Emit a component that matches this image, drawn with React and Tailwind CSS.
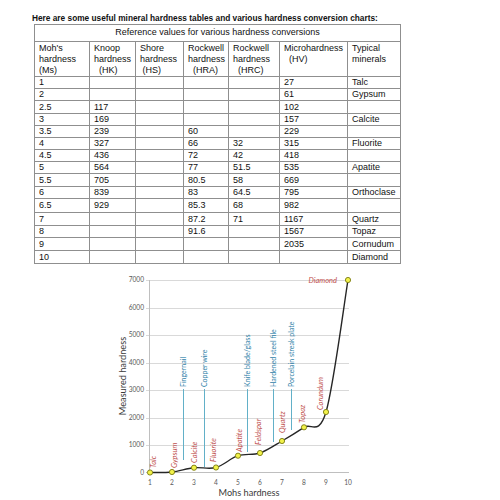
const ROWS = [
  ['1', '', '', '', '', '27', 'Talc'],
  ['2', '', '', '', '', '61', 'Gypsum'],
  ['2.5', '117', '', '', '', '102', ''],
  ['3', '169', '', '', '', '157', 'Calcite'],
  ['3.5', '239', '', '60', '', '229', ''],
  ['4', '327', '', '66', '32', '315', 'Fluorite'],
  ['4.5', '436', '', '72', '42', '418', ''],
  ['5', '564', '', '77', '51.5', '535', 'Apatite'],
  ['5.5', '705', '', '80.5', '58', '669', ''],
  ['6', '839', '', '83', '64.5', '795', 'Orthoclase'],
  ['6.5', '929', '', '85.3', '68', '982', ''],
  ['7', '', '', '87.2', '71', '1167', 'Quartz'],
  ['8', '', '', '91.6', '', '1567', 'Topaz'],
  ['9', '', '', '', '', '2035', 'Cornudum'],
  ['10', '', '', '', '', '', 'Diamond'],
]

// header lines; the leading nbsp's mimic the odd indent in the source table
const HEAD = [
  ["Moh's", 'hardness', '(Ms)'],
  ['Knoop', 'hardness', '\u00a0\u00a0(HK)'],
  ['Shore', 'hardness', '\u00a0(HS)'],
  ['Rockwell', 'hardness', '\u00a0\u00a0(HRA)'],
  ['Rockwell', 'hardness', '\u00a0\u00a0(HRC)'],
  ['Microhardness', '\u00a0\u00a0(HV)'],
  ['Typical', 'minerals'],
]

// chart, in page pixels
const X0 = 150
const STEP = 22
const Y0 = 472.5
const PER_K = 27.5
const xAt = (m) => X0 + (m - 1) * STEP

const POINTS = [
  [1, 472.5], [2, 472], [3, 467.7], [4, 467.5], [5, 455.7],
  [6, 453], [7, 441], [8, 427.3], [9, 412], [10, 280],
].map(([m, y]) => [xAt(m), y])

const MINERALS = [
  ['Talc', 153, 468],
  ['Gypsum', 174, 468],
  ['Calcite', 194, 463],
  ['Fluorite', 213.5, 462],
  ['Apatite', 239, 452],
  ['Feldspar', 258.5, 445],
  ['Quartz', 282, 433],
  ['Topaz', 302, 423],
  ['Corundum', 320, 410],
]

const TOOLS = [
  ['Fingernail', 183, 460],
  ['Copper wire', 204, 467],
  ['Knife blade/glass', 247, 452],
  ['Hardened steel file', 273, 442],
  ['Porcelain streak plate', 291, 430],
]

// Catmull-Rom through the points, close to Excel's "smoothed line"
function smoothPath(p) {
  let d = `M${p[0][0]},${p[0][1]}`
  for (let i = 0; i < p.length - 1; i++) {
    const a = p[i - 1] || p[i]
    const b = p[i]
    const c = p[i + 1]
    const e = p[i + 2] || c
    const c1 = [b[0] + (c[0] - a[0]) / 6, b[1] + (c[1] - a[1]) / 6]
    const c2 = [c[0] - (e[0] - b[0]) / 6, c[1] - (e[1] - b[1]) / 6]
    d += ` C${c1[0]},${c1[1]} ${c2[0]},${c2[1]} ${c[0]},${c[1]}`
  }
  return d
}

function HardnessChart() {
  const grid = [1, 2, 3, 4, 5, 6, 7].map((k) => Math.round(Y0 - k * PER_K) + 0.5)
  return (
    <svg
      width="260"
      height="232"
      viewBox="105 268 260 232"
      className="block ml-[73px] mt-[4px]"
      style={{ fontFamily: 'Lato, "Open Sans", sans-serif' }}
    >
      {grid.map((y) => (
        <line key={y} x1="146" x2="349" y1={y} y2={y} stroke="#d9d9d9" strokeWidth="1" />
      ))}
      <line x1="149.5" x2="149.5" y1="280" y2="473" stroke="#bfbfbf" strokeWidth="1" />
      <line x1="146" x2="349" y1="472.5" y2="472.5" stroke="#bfbfbf" strokeWidth="1" />

      {[0, 1, 2, 3, 4, 5, 6, 7].map((k) => (
        <text key={k} x="144" y={Y0 - k * PER_K + 2.3} textAnchor="end" fontSize="6.6" fill="#595959">
          {k * 1000}
        </text>
      ))}
      {[1, 2, 3, 4, 5, 6, 7, 8, 9, 10].map((m) => (
        <text key={m} x={xAt(m)} y="484.5" textAnchor="middle" fontSize="6.6" fill="#595959">
          {m}
        </text>
      ))}

      <text x="249" y="496" textAnchor="middle" fontSize="9.2" fill="#3a3a3a">
        Mohs hardness
      </text>
      <text transform="translate(123,376) rotate(-90)" dy="0.35em" textAnchor="middle" fontSize="9.2" fill="#3a3a3a">
        Measured hardness
      </text>

      {TOOLS.map(([label, x, bottom]) => (
        <g key={label}>
          <line x1={x + 0.5} x2={x + 0.5} y1="389" y2={bottom} stroke="#62b0c8" strokeWidth="1" />
          <text
            transform={`translate(${x + 0.5},387) rotate(-90)`}
            dy="0.35em"
            fontSize="7"
            fill="#2f82a8"
          >
            {label}
          </text>
        </g>
      ))}

      {MINERALS.map(([label, x, bottom]) => (
        <text
          key={label}
          transform={`translate(${x},${bottom}) rotate(-90)`}
          dy="0.35em"
          fontSize="7.5"
          fontStyle="italic"
          fill="#c0504d"
        >
          {label}
        </text>
      ))}
      <text x="337" y="283" textAnchor="end" fontSize="7.5" fontStyle="italic" fill="#c0504d">
        Diamond
      </text>

      <path d={smoothPath(POINTS)} fill="none" stroke="#262626" strokeWidth="1.4" />
      {POINTS.map(([x, y], i) => (
        <circle key={i} cx={x} cy={y} r="2.6" fill="#f2f24a" stroke="#7a7a10" strokeWidth="0.9" />
      ))}
    </svg>
  )
}

export default function App() {
  return (
    <div className="min-h-[500px] bg-white pl-[32px] pt-[13px] text-[#111] font-['Liberation_Sans',Arial,sans-serif]">
      <p className="text-[8.3px] leading-[10px] font-bold whitespace-nowrap">
        Here are some useful mineral hardness tables and various hardness conversion charts:
      </p>

      <div className="ml-[2px] mt-[1px] w-max grid grid-cols-[54px_45px_47px_44px_50px_67px_52px] grid-rows-[16px_34px_11px_11px_12px_11px_11px_11px_11px_11px_12px_11px_13px_12px_11px_12px_12px] gap-px p-px bg-[#8f8f8f] text-[9px]">
        <div className="col-span-7 bg-white flex items-center justify-center pb-[1px] leading-none">
          Reference values for various hardness conversions
        </div>

        {HEAD.map((lines, i) => (
          <div key={i} className="bg-white pl-[4px] pt-[1px] leading-[11px] whitespace-pre">
            {lines.map((l, j) => (
              <div key={j}>{l}</div>
            ))}
          </div>
        ))}

        {ROWS.map((row, r) =>
          row.map((cell, c) => (
            <div key={`${r}-${c}`} className="bg-white pl-[4px] flex items-center leading-none">
              {cell}
            </div>
          ))
        )}
      </div>

      <HardnessChart />
    </div>
  )
}
